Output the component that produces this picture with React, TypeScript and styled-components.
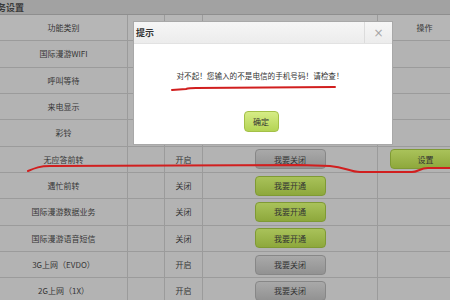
import React from "react";
import styled, { createGlobalStyle } from "styled-components";

const Global = createGlobalStyle`
  html, body { margin: 0; padding: 0; }
  body {
    width: 450px;
    height: 300px;
    overflow: hidden;
    background: #b3b3b3;
    font-family: "Noto Sans CJK SC", "Noto Sans", sans-serif;
  }
`;

const Page = styled.div`
  position: relative;
  width: 450px;
  height: 300px;
  overflow: hidden;
`;

const TopBar = styled.div`
  height: 15px;
  background: #a2a2a2;
  border-bottom: 1px solid #8e8e8e;
  box-sizing: border-box;
  display: flex;
  align-items: center;
  overflow: hidden;
`;

const TopTitle = styled.span`
  margin-left: -12px;
  font-size: 9px;
  font-weight: bold;
  color: #3a3a3a;
  white-space: nowrap;
`;

const Grid = styled.div`
  display: grid;
  grid-template-columns: 128px 37px 38px 175px 94px;
  grid-auto-rows: 26.33px;
  width: 472px;
`;

const Cell = styled.div<{ $head?: boolean }>`
  box-sizing: border-box;
  border-right: 1px solid #9b9b9b;
  border-bottom: 1px solid #9b9b9b;
  background: ${(p) => (p.$head ? "#b6b6b6" : "#b3b3b3")};
  display: flex;
  align-items: center;
  justify-content: center;
  font-size: 8px;
  color: #363636;
  white-space: nowrap;
`;

const ActionCell = styled(Cell)`
  justify-content: flex-start;
  padding-left: 12px;
`;

const Btn = styled.div<{ $green?: boolean }>`
  box-sizing: border-box;
  width: 71px;
  height: 20px;
  border-radius: 4px;
  display: flex;
  align-items: center;
  justify-content: center;
  font-size: 8px;
  color: #333;
  border: 1px solid ${(p) => (p.$green ? "#7f9a34" : "#878787")};
  background: ${(p) =>
    p.$green
      ? "linear-gradient(#a9c25a, #8ea83c)"
      : "linear-gradient(#a9a9a9, #929292)"};
`;

const Dialog = styled.div`
  position: absolute;
  left: 133px;
  top: 21px;
  width: 260px;
  height: 124px;
  box-sizing: border-box;
  background: #ffffff;
  border: 1px solid #a8a8a8;
  display: flex;
  flex-direction: column;
`;

const DialogHead = styled.div`
  height: 21px;
  display: flex;
  align-items: stretch;
  background: linear-gradient(#f6f6f6, #ececec);
  border-bottom: 1px solid #e2e2e2;
`;

const DialogTitle = styled.div`
  flex: 1;
  display: flex;
  align-items: center;
  padding-left: 2px;
  font-size: 9px;
  font-weight: bold;
  color: #333;
`;

const CloseBox = styled.div`
  width: 27px;
  border-left: 1px solid #dcdcdc;
  display: flex;
  align-items: center;
  justify-content: center;
  color: #a6a6a6;
  font-size: 12px;
  font-family: "DejaVu Sans", sans-serif;
`;

const DialogBody = styled.div`
  flex: 1;
  display: flex;
  flex-direction: column;
  align-items: center;
  padding-top: 26px;
  gap: 30px;
`;

const Message = styled.div`
  font-size: 7.6px;
  color: #333;
  margin-left: -6px;
  white-space: nowrap;
`;

const OkBtn = styled.div`
  box-sizing: border-box;
  width: 35px;
  height: 21px;
  margin-left: -4px;
  border-radius: 4px;
  border: 1px solid #a4c048;
  background: linear-gradient(#d6ec86, #b4d454);
  display: flex;
  align-items: center;
  justify-content: center;
  font-size: 8px;
  color: #333;
`;

const Marks = styled.svg`
  position: absolute;
  left: 0;
  top: 0;
  pointer-events: none;
`;

type Row = { name: string; status?: string; on?: boolean; setting?: boolean };

const rows: Row[] = [
  { name: "国际漫游WIFI" },
  { name: "呼叫等待" },
  { name: "来电显示" },
  { name: "彩铃" },
  { name: "无应答前转", status: "开启", on: true, setting: true },
  { name: "遇忙前转", status: "关闭", on: false },
  { name: "国际漫游数据业务", status: "关闭", on: false },
  { name: "国际漫游语音短信", status: "关闭", on: false },
  { name: "3G上网（EVDO）", status: "开启", on: true },
  { name: "2G上网（1X）", status: "开启", on: true },
];

export default function App() {
  return (
    <Page>
      <Global />
      <TopBar>
        <TopTitle>业务设置</TopTitle>
      </TopBar>
      <Grid>
        <Cell $head>功能类别</Cell>
        <Cell $head />
        <Cell $head>状态</Cell>
        <Cell $head />
        <Cell $head>操作</Cell>
        {rows.map((r) => (
          <React.Fragment key={r.name}>
            <Cell>{r.name}</Cell>
            <Cell />
            <Cell>{r.status ?? ""}</Cell>
            <Cell>
              {r.status ? (
                <Btn $green={!r.on}>{r.on ? "我要关闭" : "我要开通"}</Btn>
              ) : null}
            </Cell>
            <ActionCell>{r.setting ? <Btn $green>设置</Btn> : null}</ActionCell>
          </React.Fragment>
        ))}
      </Grid>
      <Dialog>
        <DialogHead>
          <DialogTitle>提示</DialogTitle>
          <CloseBox>×</CloseBox>
        </DialogHead>
        <DialogBody>
          <Message>对不起！您输入的不是电信的手机号码！请检查！</Message>
          <OkBtn>确定</OkBtn>
        </DialogBody>
      </Dialog>
      <Marks width="450" height="300" viewBox="0 0 450 300">
        <path
          d="M172 90 L186 89 C189 88 191 88 196 88 L335 87"
          stroke="#d11f1f"
          strokeWidth="2"
          fill="none"
          strokeLinecap="round"
        />
        <path
          d="M28 171 C35 168 40 166 50 166 L300 165 L330 166 C345 167 350 172 360 172 L412 172 C418 172 420 168 428 168 L450 168"
          stroke="#d11f1f"
          strokeWidth="2"
          fill="none"
          strokeLinecap="round"
        />
      </Marks>
    </Page>
  );
}
